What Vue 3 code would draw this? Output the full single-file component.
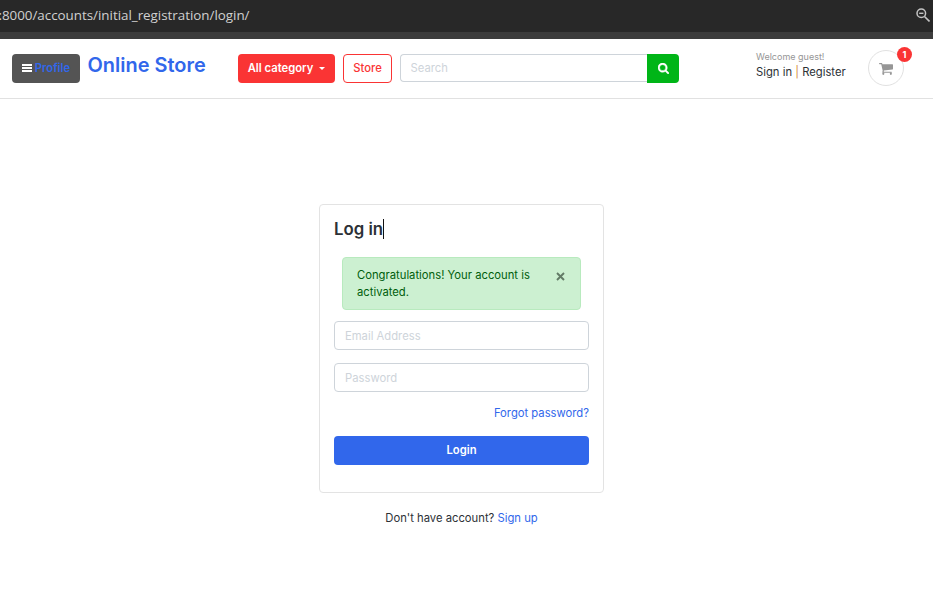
<script setup>
import { ref } from 'vue'

const search = ref('')
const email = ref('')
const password = ref('')
const showAlert = ref(true)
</script>

<template>
  <div class="page">
    <div class="urlbar">
      <span class="url">:8000/accounts/initial_registration/login/</span>
      <svg class="zoom-icon" viewBox="0 0 14 14" width="14" height="14" fill="none" stroke="#c4c4c4">
        <circle cx="5.3" cy="5.3" r="4.3" stroke-width="1.5" />
        <path d="M3.2 5.3h4.2" stroke-width="1.4" />
        <path d="M8.5 8.5l5 5" stroke-width="1.6" />
      </svg>
    </div>
    <div class="toolbar-edge"></div>

    <header class="header">
      <button class="btn profile" type="button">
        <svg viewBox="0 0 10 9" width="10" height="9" fill="#fff">
          <path d="M0 0h10v2H0zM0 3h10v2H0zM0 6h10v2H0z" />
        </svg>
        <span>Profile</span>
      </button>
      <a class="brand">Online Store</a>
      <button class="btn category" type="button">All category<i class="caret"></i></button>
      <button class="btn store" type="button">Store</button>
      <form class="search" @submit.prevent>
        <input v-model="search" type="text" placeholder="Search" />
        <button type="submit" aria-label="Search">
          <svg viewBox="0 0 1664 1664" width="11" height="11" fill="#fff" stroke="#fff" stroke-width="60">
            <path d="M1152 704a448 448 0 1 0-896 0 448 448 0 0 0 896 0zm512 832c0 70-58 128-128 128-34 0-67-14-90-38l-343-342a702 702 0 0 1-399 124C315 1408 0 1093 0 704S315 0 704 0s704 315 704 704c0 142-43 282-124 399l343 343c23 23 37 56 37 90z" />
          </svg>
        </button>
      </form>
      <div class="guest">
        <small>Welcome guest!</small>
        <div><a>Sign in</a> <span class="bar">|</span> <a>Register</a></div>
      </div>
      <a class="cart" aria-label="Cart">
        <svg viewBox="0 0 1664 1408" width="14" height="12" fill="#969696">
          <path d="M640 1280a128 128 0 1 1-256 0 128 128 0 0 1 256 0zm896 0a128 128 0 1 1-256 0 128 128 0 0 1 256 0zm128-1088v512c0 32-25 60-57 64L563 890c4 21 13 48 13 70 0 23-14 44-24 64h920c35 0 64 29 64 64s-29 64-64 64H448c-35 0-64-29-64-64 0-31 45-106 61-137L268 128H64C29 128 0 99 0 64S29 0 64 0h256c67 0 69 80 79 128h1201c35 0 64 29 64 64z" />
        </svg>
        <span class="badge">1</span>
      </a>
    </header>

    <main class="main">
      <section class="card">
        <h4>Log in<i class="text-caret"></i></h4>
        <div v-if="showAlert" class="alert">
          <p>Congratulations! Your account is activated.</p>
          <button type="button" aria-label="Close" @click="showAlert = false">
            <svg viewBox="0 0 9 9" width="9" height="9" fill="none" stroke="#627a66" stroke-width="1.9">
              <path d="M1 1l7 7M8 1l-7 7" />
            </svg>
          </button>
        </div>
        <form @submit.prevent>
          <input v-model="email" class="field" type="email" placeholder="Email Address" />
          <input v-model="password" class="field" type="password" placeholder="Password" />
          <a class="forgot">Forgot password?</a>
          <button class="login" type="submit">Login</button>
        </form>
      </section>
      <p class="signup">Don't have account? <a>Sign up</a></p>
    </main>
  </div>
</template>

<style>
body {
  margin: 0;
  background: #fff;
}
</style>

<style scoped>
* {
  box-sizing: border-box;
}
.page {
  height: 599px;
  overflow: hidden;
  font: 400 11.25px/17px Inter, "Liberation Sans", sans-serif;
  color: #2c3136;
}
button,
input {
  font: inherit;
  margin: 0;
}
a {
  cursor: pointer;
}
.urlbar {
  height: 32px;
  background: #282828;
  display: flex;
  justify-content: space-between;
  padding: 7px 3px 0 0;
}
.url {
  font: 13.4px/18px "Open Sans", "Noto Sans", sans-serif;
  letter-spacing: -0.02px;
  color: #d0d0d0;
  margin-left: -1.6px;
  margin-top: -1px;
}
.zoom-icon {
  margin-top: 1px;
}
.toolbar-edge {
  height: 7px;
  background: #3c3c3c;
}
.header {
  height: 60px;
  border-bottom: 1px solid #e1e1e1;
  display: flex;
  align-items: flex-start;
  padding: 15px 0 0 12px;
}
.btn {
  height: 29px;
  border-radius: 4px;
  border: 1px solid transparent;
  padding: 0;
  display: flex;
  align-items: center;
  justify-content: center;
  white-space: nowrap;
}
.profile {
  width: 68px;
  gap: 3px;
  background: #545454;
  color: #3167eb;
  font-weight: 600;
}
.brand {
  width: 158px;
  padding-left: 7.5px;
  font-size: 19.95px;
  font-weight: 600;
  line-height: 22px;
  color: #3167eb;
  white-space: nowrap;
}
.category {
  width: 97px;
  background: #fa3434;
  color: #fff;
  font-weight: 600;
}
.caret {
  margin-left: 6px;
  border: 3px solid transparent;
  border-top-color: #fff;
  border-bottom: 0;
}
.store {
  width: 49px;
  margin: 0 8px;
  background: #fff;
  border-color: #fa3434;
  color: #fa3434;
  font-weight: 500;
}
.search {
  display: flex;
  width: 279px;
}
.search input {
  flex: 1;
  min-width: 0;
  height: 28px;
  border: 1px solid #ced4da;
  border-right: 0;
  border-radius: 4px 0 0 4px;
  padding: 0 9.5px;
}
input {
  background: #fff;
  outline: none;
}
input::placeholder {
  color: #ced4da;
  opacity: 1;
}
.search button {
  width: 32px;
  height: 29px;
  border: 0;
  border-radius: 0 4px 4px 0;
  background: #00b517;
  display: flex;
  align-items: center;
  justify-content: center;
  padding: 0;
}
.guest {
  width: 112px;
  margin-left: 77px;
  margin-top: -4px;
  white-space: nowrap;
}
.guest small {
  display: block;
  font-size: 9px;
  line-height: 14px;
  color: #969696;
}
.guest div {
  line-height: 17px;
}
.bar {
  color: #d28b36;
}
.cart {
  position: relative;
  width: 36px;
  height: 36px;
  margin-top: -4px;
  border: 1px solid #e1e1e1;
  border-radius: 50%;
  display: flex;
  align-items: center;
  justify-content: center;
}
.cart svg {
  margin-top: 2px;
}
.badge {
  position: absolute;
  top: -4px;
  right: -9px;
  width: 15px;
  height: 15px;
  border-radius: 50%;
  background: #fa3434;
  color: #fff;
  font-size: 9px;
  font-weight: 700;
  line-height: 15px;
  text-align: center;
}
.main {
  padding: 105px 10px 0 0;
  display: flex;
  flex-direction: column;
  align-items: center;
}
.card {
  width: 285px;
  height: 289px;
  border: 1px solid #e3e3e3;
  border-radius: 4px;
  padding: 14px;
}
h4 {
  margin: 0;
  height: 38px;
  font-size: 16.8px;
  font-weight: 600;
  line-height: 20px;
  display: flex;
}
.text-caret {
  width: 1px;
  height: 20px;
  background: #111;
}
.alert {
  margin: 0 8px 11px;
  height: 53px;
  border: 1px solid #b8eabe;
  border-radius: 4px;
  background: #ccf0d1;
  color: #005e0c;
  display: flex;
  justify-content: space-between;
  padding: 9px 15px 0 14px;
}
.alert p {
  margin: 0;
  width: 185px;
}
.alert button {
  width: 9px;
  height: 9px;
  margin-top: 5px;
  padding: 0;
  border: 0;
  background: none;
  display: flex;
}
.field {
  display: block;
  width: 100%;
  height: 29px;
  margin-bottom: 13px;
  padding: 0 10px;
  border: 1px solid #ced4da;
  border-radius: 4px;
}
.forgot {
  display: block;
  text-align: right;
  color: #3167eb;
  margin-bottom: 14px;
}
.login {
  display: block;
  width: 100%;
  height: 29px;
  border: 0;
  border-radius: 4px;
  background: #3167eb;
  color: #fff;
  font-weight: 600;
}
.signup {
  margin: 17px 0 0;
}
.signup a {
  color: #3167eb;
}
</style>
